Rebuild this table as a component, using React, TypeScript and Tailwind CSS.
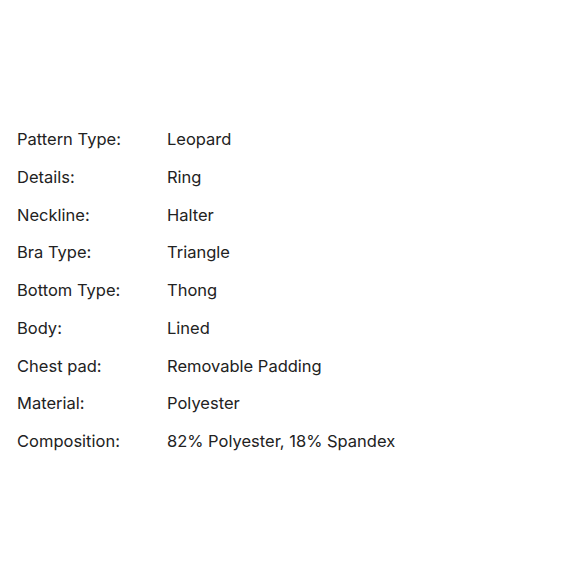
const rows: [string, string][] = [
  ["Pattern Type:", "Leopard"],
  ["Details:", "Ring"],
  ["Neckline:", "Halter"],
  ["Bra Type:", "Triangle"],
  ["Bottom Type:", "Thong"],
  ["Body:", "Lined"],
  ["Chest pad:", "Removable Padding"],
  ["Material:", "Polyester"],
  ["Composition:", "82% Polyester, 18% Spandex"],
];

const App = () => {
  return (
    <div className="w-[580px] h-[580px] bg-white pt-[127px] pl-[17px] text-[#222] text-[16.5px] font-['Inter',sans-serif]">
      {rows.map(([label, value]) => (
        <div key={label} className="flex h-[37.75px] items-start leading-[24px]">
          <span className="w-[150px] shrink-0">{label}</span>
          <span>{value}</span>
        </div>
      ))}
    </div>
  );
};

export default App;
